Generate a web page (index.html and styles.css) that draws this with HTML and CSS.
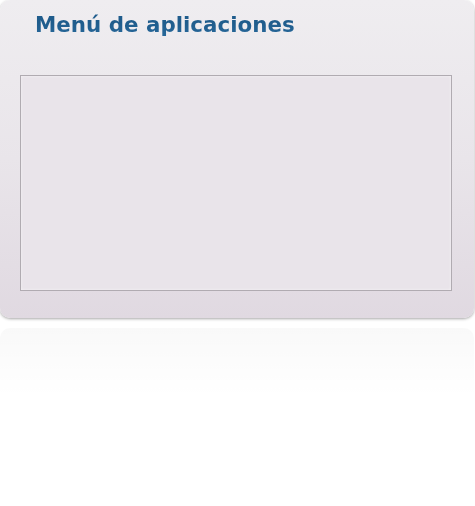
FILE: index.html
```html
<!DOCTYPE html>
<html lang="es">
<head>
  <meta charset="UTF-8" />
  <meta name="viewport" content="width=device-width, initial-scale=1.0"/>
  <title>Menú de aplicaciones</title>
  <link rel="stylesheet" href="styles.css">
</head>
<body>
  <div class="panel">
    <h2 class="title">Menú de aplicaciones</h2>
    <div class="apps"></div>
  </div>
  <div class="reflection"></div>
</body>
</html>
```

FILE: styles.css
```css
body {
  margin: 0;
  padding: 0;
  background-color: #fff;
  font-family: 'DejaVu Sans', Verdana, sans-serif;
}

.panel {
  width: 474px;
  height: 318px;
  box-sizing: border-box;
  padding: 0 22px 0 20px;
  border-radius: 10px;
  background: linear-gradient(to bottom, #efedf0 0%, #e9e5ea 50%, #e0d9e1 100%);
  box-shadow: 0 1px 3px rgba(0, 0, 0, 0.35);
  overflow: hidden;
}

.title {
  margin: 0;
  padding: 11px 0 0 15px;
  height: 75px;
  box-sizing: border-box;
  font-size: 21.4px;
  line-height: 28px;
  font-weight: bold;
  color: #2a6a9c;
  background: linear-gradient(to bottom, #1f5c8c 30%, #3b83bb 90%);
  -webkit-background-clip: text;
  background-clip: text;
  -webkit-text-fill-color: transparent;
}

.apps {
  width: 432px;
  height: 216px;
  box-sizing: border-box;
  border: 1px solid #b0abb1;
  background-color: #e9e4ea;
  box-shadow: inset 0 0 3px rgba(255, 255, 255, 0.6);
}

.reflection {
  width: 474px;
  height: 70px;
  margin-top: 10px;
  border-radius: 10px 10px 0 0;
  background: linear-gradient(to bottom, rgba(0, 0, 0, 0.022), rgba(0, 0, 0, 0));
}
```
